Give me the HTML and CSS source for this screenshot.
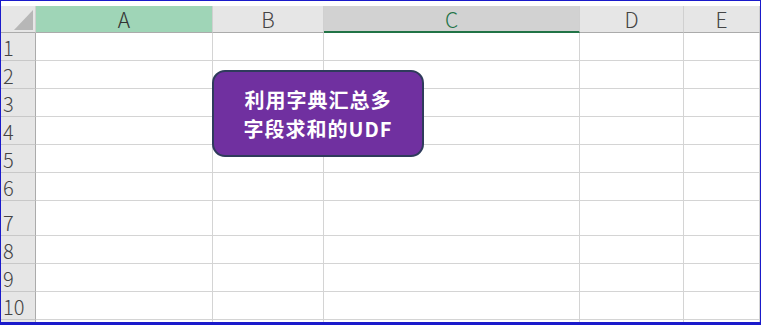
FILE: index.html
```html
<!DOCTYPE html>
<html lang="zh-CN">
<head>
    <meta charset="UTF-8">
    <title>利用字典汇总多字段求和的UDF</title>
    <link rel="stylesheet" href="styles.css">
</head>
<body>
    <div class="frame">
        <div class="sheet">
            <div class="gap"></div>
            <div class="corner"><span class="tri"></span></div>
            <div class="col-head col-a">A</div>
            <div class="col-head">B</div>
            <div class="col-head col-c">C</div>
            <div class="col-head">D</div>
            <div class="col-head">E</div>
        </div>
        <div class="sheet" id="rows"></div>
        <div class="shape">利用字典汇总多<br>字段求和的UDF</div>
    </div>

    <script>
        document.addEventListener("DOMContentLoaded", function() {
            let rows = document.getElementById("rows");
            for (let i = 1; i <= 11; i++) {
                let cls = "row";
                if (i === 7) cls += " tall";
                if (i === 11) cls += " cut";
                let html = `<div class="row-head">${i <= 10 ? i : ""}</div>`;
                for (let c = 0; c < 5; c++) {
                    html += `<div class="cell"></div>`;
                }
                let row = document.createElement("div");
                row.className = cls;
                row.innerHTML = html;
                rows.appendChild(row);
            }
        });
    </script>
</body>
</html>
```

FILE: styles.css
```css
body {
    margin: 0;
    padding: 0;
    background-color: #ffffff;
    font-family: "Noto Sans CJK SC", "Noto Sans", sans-serif;
}
.frame {
    position: relative;
    width: 761px;
    height: 325px;
    box-sizing: border-box;
    border: 1px solid #1a1acb;
    border-bottom-width: 3px;
    overflow: hidden;
    background-color: #ffffff;
}
.sheet {
    display: grid;
    grid-template-columns: 35px 177px 111px 256px 104px 76px;
}
.gap {
    grid-column: 1 / -1;
    height: 5px;
}
.corner,
.col-head {
    height: 27px;
    box-sizing: border-box;
    background-color: #e6e6e6;
    border-bottom: 1px solid #ababab;
}
.corner {
    position: relative;
    border-right: 1px solid #d0d0d0;
}
.tri {
    position: absolute;
    left: 13px;
    top: 4px;
    width: 19px;
    height: 20px;
    background-color: #b7b7b7;
    clip-path: polygon(100% 0, 100% 100%, 0 100%);
}
.col-head {
    display: flex;
    align-items: center;
    justify-content: center;
    font-size: 21px;
    font-weight: 300;
    color: #444444;
    border-right: 1px solid #d0d0d0;
    line-height: 1;
    padding-top: 1px;
}
.col-a {
    background-color: #9fd5b7;
    color: #333333;
}
.col-c {
    background-color: #d2d2d2;
    color: #217346;
    border-bottom: 2px solid #217346;
}
.row {
    display: contents;
}
.row-head,
.cell {
    height: 28px;
    box-sizing: border-box;
    border-bottom: 1px solid #d4d4d4;
    border-right: 1px solid #d4d4d4;
}
.row-head {
    background-color: #e6e6e6;
    border-right-color: #ababab;
    border-bottom-color: #c8c8c8;
    font-size: 20px;
    font-weight: 300;
    color: #444444;
    padding-left: 2px;
    display: flex;
    align-items: flex-end;
    line-height: 1;
    padding-bottom: 2px;
}
.tall .row-head,
.tall .cell {
    height: 35px;
}
.cut .row-head,
.cut .cell {
    height: 4px;
}
.shape {
    position: absolute;
    left: 211px;
    top: 69px;
    width: 212px;
    height: 87px;
    box-sizing: border-box;
    background-color: #7030a0;
    border: 2px solid #2f3b5c;
    border-radius: 13px;
    color: #ffffff;
    font-size: 20px;
    font-weight: bold;
    line-height: 29px;
    display: flex;
    align-items: center;
    justify-content: center;
    text-align: center;
    letter-spacing: 1px;
}
```
